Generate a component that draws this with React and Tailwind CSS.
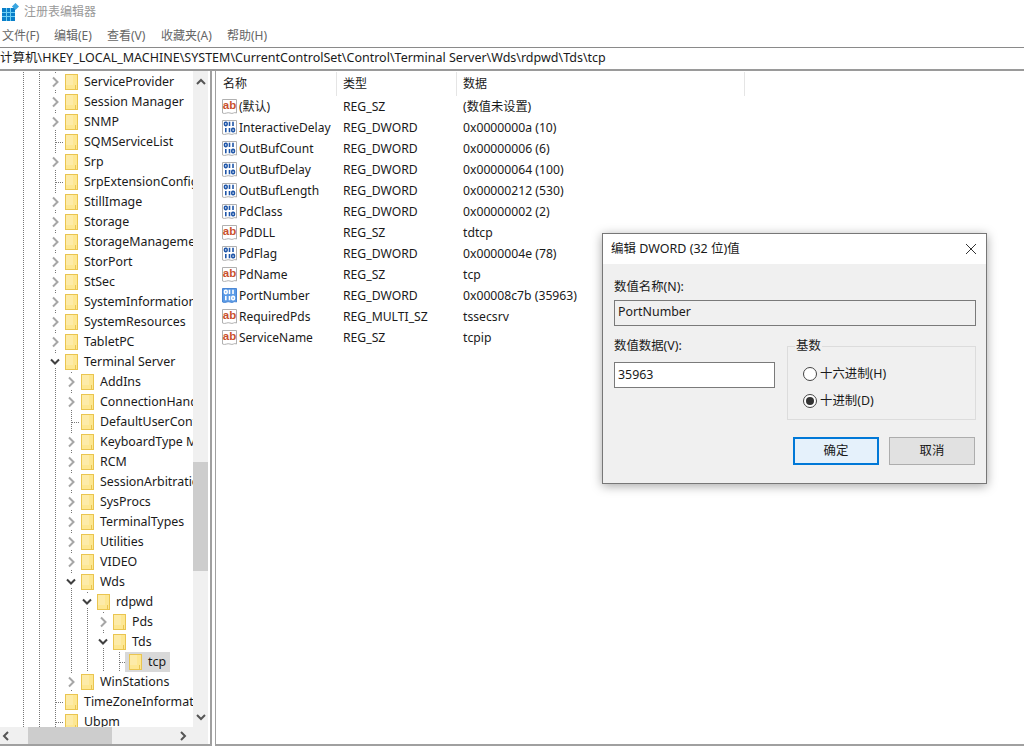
import React from 'react'

const treeRows = [
  { name: 'ServiceProvider', guides: 2, node: 'closed' },
  { name: 'Session Manager', guides: 2, node: 'closed' },
  { name: 'SNMP', guides: 2, node: 'closed' },
  { name: 'SQMServiceList', guides: 2, node: 'leaf' },
  { name: 'Srp', guides: 2, node: 'closed' },
  { name: 'SrpExtensionConfig', guides: 2, node: 'leaf' },
  { name: 'StillImage', guides: 2, node: 'closed' },
  { name: 'Storage', guides: 2, node: 'closed' },
  { name: 'StorageManagement', guides: 2, node: 'closed' },
  { name: 'StorPort', guides: 2, node: 'closed' },
  { name: 'StSec', guides: 2, node: 'closed' },
  { name: 'SystemInformation', guides: 2, node: 'closed' },
  { name: 'SystemResources', guides: 2, node: 'closed' },
  { name: 'TabletPC', guides: 2, node: 'closed' },
  { name: 'Terminal Server', guides: 2, node: 'open' },
  { name: 'AddIns', guides: 3, node: 'closed' },
  { name: 'ConnectionHandler', guides: 3, node: 'closed' },
  { name: 'DefaultUserConfig', guides: 3, node: 'leaf' },
  { name: 'KeyboardType Mapping', guides: 3, node: 'closed' },
  { name: 'RCM', guides: 3, node: 'closed' },
  { name: 'SessionArbitration', guides: 3, node: 'closed' },
  { name: 'SysProcs', guides: 3, node: 'closed' },
  { name: 'TerminalTypes', guides: 3, node: 'closed' },
  { name: 'Utilities', guides: 3, node: 'closed' },
  { name: 'VIDEO', guides: 3, node: 'closed' },
  { name: 'Wds', guides: 3, node: 'open' },
  { name: 'rdpwd', guides: 4, node: 'open' },
  { name: 'Pds', guides: 5, node: 'closed' },
  { name: 'Tds', guides: 5, node: 'open' },
  { name: 'tcp', guides: 6, node: 'leaf', selected: true },
  { name: 'WinStations', guides: 3, node: 'closed' },
  { name: 'TimeZoneInformation', guides: 2, node: 'leaf' },
  { name: 'Ubpm', guides: 2, node: 'leaf' },
]

const values = [
  { name: '(默认)', type: 'REG_SZ', data: '(数值未设置)', icon: 'sz' },
  { name: 'InteractiveDelay', type: 'REG_DWORD', data: '0x0000000a (10)', icon: 'bin' },
  { name: 'OutBufCount', type: 'REG_DWORD', data: '0x00000006 (6)', icon: 'bin' },
  { name: 'OutBufDelay', type: 'REG_DWORD', data: '0x00000064 (100)', icon: 'bin' },
  { name: 'OutBufLength', type: 'REG_DWORD', data: '0x00000212 (530)', icon: 'bin' },
  { name: 'PdClass', type: 'REG_DWORD', data: '0x00000002 (2)', icon: 'bin' },
  { name: 'PdDLL', type: 'REG_SZ', data: 'tdtcp', icon: 'sz' },
  { name: 'PdFlag', type: 'REG_DWORD', data: '0x0000004e (78)', icon: 'bin' },
  { name: 'PdName', type: 'REG_SZ', data: 'tcp', icon: 'sz' },
  { name: 'PortNumber', type: 'REG_DWORD', data: '0x00008c7b (35963)', icon: 'active' },
  { name: 'RequiredPds', type: 'REG_MULTI_SZ', data: 'tssecsrv', icon: 'sz' },
  { name: 'ServiceName', type: 'REG_SZ', data: 'tcpip', icon: 'sz' },
]

function Guide() {
  return (
    <svg width="16" height="20" className="shrink-0">
      <path d="M7.5 0V20" stroke="#777" strokeDasharray="1 1" />
    </svg>
  )
}

function NodeCell({ node }) {
  return (
    <svg width="16" height="20" className="shrink-0" fill="none">
      {node === 'leaf' && <path d="M7.5 0V20M8 10.5H15" stroke="#777" strokeDasharray="1 1" />}
      {node === 'closed' && (
        <>
          <path d="M7.5 0V2M7.5 18V20" stroke="#777" strokeDasharray="1 1" />
          <path d="M5 5.5L9.5 10L5 14.5" stroke="#a6a6a6" strokeWidth="2" />
        </>
      )}
      {node === 'open' && (
        <>
          <path d="M7.5 0V2M7.5 16V20" stroke="#777" strokeDasharray="1 1" />
          <path d="M3 7.5L7 11.5L11 7.5" stroke="#404040" strokeWidth="2" />
        </>
      )}
    </svg>
  )
}

function Folder() {
  return (
    <svg width="13" height="16" className="shrink-0">
      <rect x="0.5" y="0.5" width="12" height="15" fill="#fde792" stroke="#eac550" />
      <path d="M1 1H8V11H1Z" fill="#fdeba8" />
      <path d="M10.5 11V15.5" stroke="#eac550" />
    </svg>
  )
}

function TreeRow({ row }) {
  return (
    <div className="flex h-5 items-center whitespace-nowrap">
      <div className="w-4 shrink-0" />
      {Array.from({ length: row.guides }, (_, i) => (
        <Guide key={i} />
      ))}
      <NodeCell node={row.node} />
      <div className={`-ml-[3px] flex h-5 items-center gap-[6px] pl-1 pr-1 ${row.selected ? 'bg-[#d9d9d9]' : ''}`}>
        <Folder />
        <span>{row.name}</span>
      </div>
    </div>
  )
}

function RegIcon({ kind }) {
  const active = kind === 'active'
  return (
    <svg width="16" height="17" className="shrink-0">
      <path
        d="M0.5 1.5H14.5V15C12 13.5 11 16.5 8 15C5.5 13.8 3 16.5 0.5 15Z"
        fill={active ? '#5b9be6' : '#fff'}
        stroke={active ? '#4a86d4' : '#b0b0b0'}
      />
      {kind === 'sz' ? (
        <text x="7.5" y="11" textAnchor="middle" fontSize="11.5" fontWeight="700" fill="#c9502c" fontFamily="Liberation Sans, sans-serif">
          ab
        </text>
      ) : (
        <g fill="none" stroke={active ? '#fff' : '#1f56a8'} strokeWidth="1.6">
          <rect x="2.5" y="3.2" width="2.6" height="3.4" rx="1" />
          <path d="M7.5 2.8V7M11 2.8V7" />
          <path d="M3.8 9V13.2M7.5 9V13.2" />
          <rect x="9.8" y="9.4" width="2.6" height="3.4" rx="1" />
        </g>
      )}
    </svg>
  )
}

function Radio({ checked, label }) {
  return (
    <div className="flex h-[27px] items-center gap-[3px]">
      <span className="flex h-[14px] w-[14px] items-center justify-center rounded-full border border-[#444] bg-white">
        {checked && <span className="h-[8px] w-[8px] rounded-full bg-[#333]" />}
      </span>
      <span className="pt-[2px]">{label}</span>
    </div>
  )
}

function Arrow({ d }) {
  return (
    <svg width="10" height="10" fill="none" className="shrink-0">
      <path d={d} stroke="#555" strokeWidth="2" />
    </svg>
  )
}

function EditDialog() {
  return (
    <div className="absolute left-[602px] top-[233px] flex h-[251px] w-[385px] flex-col border border-[#777] bg-[#f0f0f0] text-[12.4px] text-[#1a1a1a] shadow-[0_2px_10px_rgba(0,0,0,0.35)]">
      <div className="flex h-[30px] shrink-0 items-center justify-between bg-white pl-2 pr-[4px] text-[12.5px]">
        <span>编辑 DWORD (32 位)值</span>
        <svg width="22" height="16" fill="none">
          <path d="M6 3L16 13M16 3L6 13" stroke="#333" />
        </svg>
      </div>
      <div className="flex flex-1 flex-col pl-[11px] pr-[10px]">
        <div className="flex h-[36px] items-end pb-[5px] leading-[16px]">数值名称(N):</div>
        <div className="flex h-[26px] items-center border border-[#7a7a7a] px-[3px] pb-[2px]">PortNumber</div>
        <div className="mt-[12px] flex gap-3">
          <div className="w-[161px]">
            <div className="h-[24px] leading-[16px]">数值数据(V):</div>
            <div className="flex h-[26px] items-center border border-[#7a7a7a] bg-white px-[3px]">35963</div>
          </div>
          <fieldset className="h-[82px] flex-1 border border-[#dcdcdc] pl-[15px]">
            <legend className="-ml-[8px] px-px leading-[16px]">基数</legend>
            <div className="pt-[6px]">
              <Radio label="十六进制(H)" />
              <Radio checked label="十进制(D)" />
            </div>
          </fieldset>
        </div>
        <div className="mt-[17px] flex justify-end gap-[10px] pr-px">
          <button className="h-[28px] w-[86px] border-2 border-[#0078d7] bg-[#e5f1fb]">确定</button>
          <button className="h-[28px] w-[86px] border border-[#adadad] bg-[#e1e1e1]">取消</button>
        </div>
      </div>
    </div>
  )
}

export default function App() {
  return (
    <div className="relative flex h-[747px] w-[1024px] flex-col overflow-hidden bg-white font-['Noto_Sans','Noto_Sans_CJK_SC',sans-serif] text-[12px] text-[#1a1a1a]">
      {/* Title bar */}
      <div className="flex h-6 shrink-0 items-center gap-[5px] pl-[2px]">
        <svg width="17" height="18" className="shrink-0">
          <rect x="0" y="5" width="13" height="13" fill="#0a7fc9" />
          <path d="M4.5 5V18M8.5 5V18M0 9.5H13M0 13.5H13" stroke="#6fd0f5" />
          <rect x="11" y="1" width="5" height="5" fill="#3aa6e0" transform="rotate(45 13.5 3.5)" />
        </svg>
        <span className="text-[#999]">注册表编辑器</span>
      </div>

      {/* Menu */}
      <div className="flex h-[23px] shrink-0 items-center pl-[2px] text-[#666]">
        <span className="w-[52px]">文件(F)</span>
        <span className="w-[53px]">编辑(E)</span>
        <span className="w-[54px]">查看(V)</span>
        <span className="w-[66px]">收藏夹(A)</span>
        <span>帮助(H)</span>
      </div>

      {/* Address bar */}
      <div className="flex h-[24px] shrink-0 items-center border-b-2 border-t border-b-[#9a9a9a] border-t-[#8a8a8a] text-[12.5px] whitespace-nowrap">
        计算机\HKEY_LOCAL_MACHINE\SYSTEM\CurrentControlSet\Control\Terminal Server\Wds\rdpwd\Tds\tcp
      </div>

      <div className="flex min-h-0 flex-1 pb-px">
        {/* Key tree */}
        <div className="flex w-[212px] shrink-0 flex-col border-b-2 border-r-2 border-[#a0a0a0]">
          <div className="flex min-h-0 flex-1 pr-[2px]">
            <div className="min-w-0 flex-1 overflow-hidden pt-px text-[12.4px]">
              {treeRows.map((row) => (
                <TreeRow key={row.name} row={row} />
              ))}
            </div>
            <div className="flex w-[15px] shrink-0 flex-col items-center bg-[#f0f0f0]">
              <div className="flex h-[20px] items-center pt-[2px]">
                <Arrow d="M1 7L5 3L9 7" />
              </div>
              <div className="mt-[371px] h-[109px] w-full bg-[#cdcdcd]" />
              <div className="mt-auto flex h-[20px] items-center">
                <Arrow d="M1 3L5 7L9 3" />
              </div>
            </div>
          </div>
          <div className="mr-[2px] flex h-[17px] shrink-0 items-center bg-[#f0f0f0]">
            <div className="flex w-[28px] justify-center pr-4">
              <Arrow d="M7 1L3 5L7 9" />
            </div>
            <div className="h-full w-[84px] bg-[#cdcdcd]" />
            <div className="ml-[66px] flex w-[10px] justify-center">
              <Arrow d="M3 1L7 5L3 9" />
            </div>
          </div>
        </div>

        {/* Value list */}
        <div className="ml-[3px] min-w-0 flex-1 border-b-2 border-l border-[#a0a0a0] pt-px">
          <div className="flex h-[24px]">
            <div className="w-[121px] border-r border-[#e5e5e5] pl-[7px] leading-[24px]">名称</div>
            <div className="w-[120px] border-r border-[#e5e5e5] pl-[6px] leading-[24px]">类型</div>
            <div className="w-[288px] border-r border-[#e5e5e5] pl-[6px] leading-[24px]">数据</div>
          </div>
          {values.map((v) => (
            <div key={v.name} className="flex h-[21px] items-center whitespace-nowrap">
              <div className="flex w-[121px] items-center gap-px pl-[6px]">
                <RegIcon kind={v.icon} />
                <span>{v.name}</span>
              </div>
              <div className="w-[120px] pl-[6px] pt-[2px] text-[12.2px]">{v.type}</div>
              <div className="pl-[6px] pt-[2px] text-[12.2px]">{v.data}</div>
            </div>
          ))}
        </div>
      </div>

      <EditDialog />
    </div>
  )
}
